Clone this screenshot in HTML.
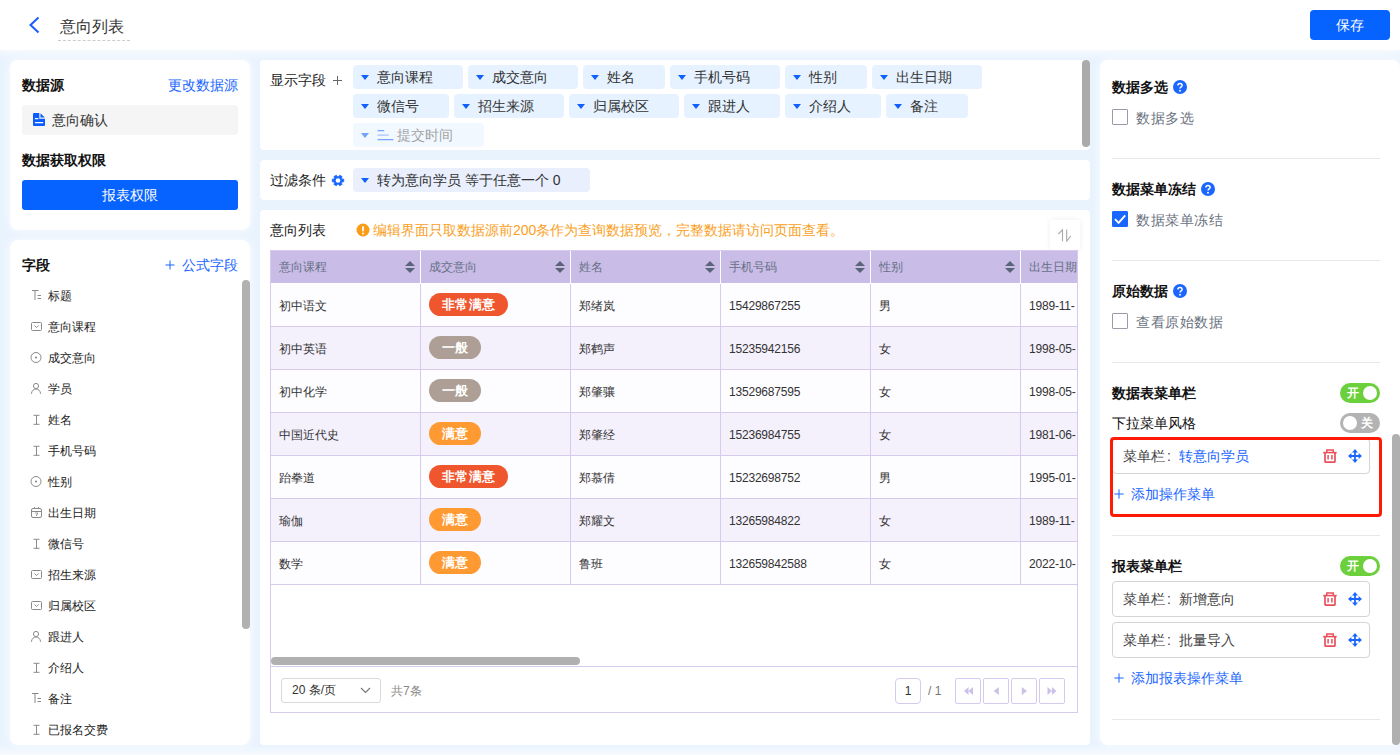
<!DOCTYPE html>
<html lang="zh">
<head>
<meta charset="utf-8">
<title>意向列表</title>
<style>
*{box-sizing:border-box;margin:0;padding:0}
html,body{width:1400px;height:755px;overflow:hidden}
body{position:relative;background:#e9f3fe;font-family:"Liberation Sans",sans-serif;font-size:14px;color:#333;line-height:1}
.abs{position:absolute}
i{font-style:normal}
.card{position:absolute;background:#fff;border-radius:8px}
.glow{box-shadow:0 0 9px 1px rgba(255,255,255,.7)}
.b{font-weight:bold;color:#111}
.blue{color:#1a66ff}
#hdr{position:absolute;left:0;top:0;width:1400px;height:50px;background:#fff;box-shadow:0 0 10px 2px rgba(255,255,255,.9)}
#title{position:absolute;left:58px;top:14px;height:27px;width:72px;padding-left:2px;padding-top:2px;font-size:16px;line-height:22px;color:#333;border-bottom:1px dashed #ccc}
#save{position:absolute;left:1310px;top:10px;width:80px;height:30px;border-radius:4px;background:#0663ff;color:#fff;font-size:14px;line-height:30px;text-align:center}
.t14{position:absolute;font-size:14px;line-height:20px;white-space:nowrap}
.fld{position:absolute;left:48px;font-size:12px;line-height:18px;color:#222;white-space:nowrap}
.fic{position:absolute;left:29px;width:14px;height:14px}
.chip{position:absolute;height:24px;border-radius:4px;background:#e6f2ff;font-size:14px;line-height:24px;color:#333;white-space:nowrap;padding-left:24px}
.chip:before{content:"";position:absolute;left:8.4px;top:9.6px;border-left:4.5px solid transparent;border-right:4.5px solid transparent;border-top:5.4px solid #1060ff}
#tbl{position:absolute;left:270px;top:250px;width:808px;height:463px;border:1px solid #d6cbef;overflow:hidden;background:#fff}
.th{position:absolute;top:-1px;height:33px;width:150px;background:#c9bce7;border-right:1px solid #fff;color:#667085;font-size:12px;line-height:35px;padding-left:8px;white-space:nowrap}
.sort{position:absolute;right:5px;top:11px;width:10px;height:12px}
.sort:before{content:"";position:absolute;left:0;top:0;border-left:5px solid transparent;border-right:5px solid transparent;border-bottom:5px solid #5a6478}
.sort:after{content:"";position:absolute;left:0;top:7px;border-left:5px solid transparent;border-right:5px solid transparent;border-top:5px solid #5a6478}
.tr{position:absolute;left:0;width:900px;height:43px;border-bottom:1px solid #d6cbef;background:#fdfcff}
.tr.odd{background:#f4f0fc}
.td{position:absolute;top:0;height:42px;width:150px;border-right:1px solid #d6cbef;font-size:12px;line-height:44px;padding-left:8px;color:#333;white-space:nowrap;overflow:hidden}
.tag{position:absolute;left:8px;top:9px;height:23px;border-radius:12px;color:#fff;font-size:13px;letter-spacing:.5px;font-weight:bold;line-height:23px;padding:0 12px 0 12.5px}
.chip.fade:before{border-top-color:#70a2ff}
.t-red{background:#f0562e}
.t-gry{background:#ad9f95}
.t-org{background:#ff9a33}
.hr{position:absolute;left:1112px;width:268px;height:1px;background:#e8e8e8}
.cb{position:absolute;left:1112px;width:16px;height:16px;border:1px solid #9a9aa8;border-radius:1px;background:#fff}
.cbl{position:absolute;left:1136px;margin-top:1px;font-size:14px;line-height:20px;color:#6b7280;letter-spacing:.6px;white-space:nowrap}
.q{position:absolute;width:14px;height:14px}
.sw{position:absolute;left:1340px;width:40px;height:20px;border-radius:10px;font-size:12px;font-weight:bold;color:#fff;line-height:20px}
.sw i{position:absolute;top:3px;width:14px;height:14px;border-radius:50%;background:#fff}
.mi{position:absolute;left:1112px;width:258px;height:36px;border:1px solid #d4d4d4;border-radius:4px;background:#fff;font-size:14px;line-height:34px;padding-left:10px;color:#444;white-space:nowrap}
</style>
</head>
<body>
<div class="abs" style="left:0;top:745px;width:1400px;height:10px;background:linear-gradient(to bottom,rgba(255,255,255,0),rgba(255,255,255,.65))"></div>
<div id="hdr">
<svg class="abs" style="left:27px;top:15px" width="14" height="20" viewBox="0 0 14 20"><path d="M11.5 2.5 L3.5 10 L11.5 17.5" fill="none" stroke="#1a5cff" stroke-width="2"/></svg>
<div id="title">意向列表</div>
<div id="save">保存</div>
</div>
<div class="card glow" style="left:10px;top:60px;width:240px;height:170px"></div>
<div class="t14 b" style="left:22px;top:75px">数据源</div>
<div class="t14 blue" style="left:168px;top:75px">更改数据源</div>
<div class="abs" style="left:22px;top:105px;width:216px;height:30px;background:#f5f5f5;border-radius:3px"></div>
<svg class="abs" style="left:33.2px;top:113px" width="12" height="13" viewBox="0 0 12 13"><path d="M1 0H6.3V5.7H12V12a1 1 0 0 1-1 1H1a1 1 0 0 1-1-1V1a1 1 0 0 1 1-1z" fill="#0a5cff"/><path d="M7.5 .2L11.8 4.5H7.5z" fill="#0a5cff"/><path d="M1.9 5.6H5.4M1.9 9.6H10.2" stroke="#fff" stroke-width="1.2" fill="none"/></svg>
<div class="t14" style="left:52px;top:110px;color:#333">意向确认</div>
<div class="t14 b" style="left:22px;top:150px">数据获取权限</div>
<div class="abs" style="left:22px;top:180px;width:216px;height:30px;background:#0663ff;border-radius:3px;color:#fff;font-size:14px;line-height:30px;text-align:center">报表权限</div>
<div class="card glow" style="left:10px;top:240px;width:240px;height:505px"></div>
<div class="t14 b" style="left:22px;top:255px">字段</div>
<svg class="abs" style="left:165px;top:260px" width="10" height="10" viewBox="0 0 10 10"><path d="M5 .5V9.5M.5 5H9.5" stroke="#1a66ff" stroke-width="1" fill="none"/></svg><div class="t14 blue" style="left:182px;top:255px">公式字段</div>
<div class="abs" style="left:242px;top:280px;width:8px;height:349px;border-radius:4px;background:#b1b1b1"></div>
<svg class="fic" style="top:288px" viewBox="0 0 14 14"><path d="M3 2.5H9.5M6 2.5V12" fill="none" stroke="#8a8a8a" stroke-width="1"/><path d="M8.5 7.5H12M8.5 10.5H12" fill="none" stroke="#8a8a8a" stroke-width="1"/></svg>
<div class="fld" style="top:287px">标题</div>
<svg class="fic" style="top:319px" viewBox="0 0 14 14"><rect x="2.5" y="3.5" width="10" height="8" rx="1" fill="none" stroke="#8a8a8a" stroke-width="1"/><path d="M5.5 6.5L7.5 8.5L9.5 6.5" fill="none" stroke="#8a8a8a" stroke-width="1"/></svg>
<div class="fld" style="top:318px">意向课程</div>
<svg class="fic" style="top:350px" viewBox="0 0 14 14"><circle cx="7" cy="7.5" r="5" fill="none" stroke="#8a8a8a" stroke-width="1"/><circle cx="7" cy="7.5" r="1.1" fill="#8a8a8a"/></svg>
<div class="fld" style="top:349px">成交意向</div>
<svg class="fic" style="top:381px" viewBox="0 0 14 14"><circle cx="7" cy="5" r="2.6" fill="none" stroke="#8a8a8a" stroke-width="1"/><path d="M2.3 12.8C2.8 9.6 4.8 8 7 8S11.2 9.6 11.7 12.8" fill="none" stroke="#8a8a8a" stroke-width="1"/></svg>
<div class="fld" style="top:380px">学员</div>
<svg class="fic" style="top:412px" viewBox="0 0 14 14"><path d="M4.5 3.3H10.5M4.5 12.3H10.5M7.5 3.3V12.3" fill="none" stroke="#8a8a8a" stroke-width="1"/></svg>
<div class="fld" style="top:411px">姓名</div>
<svg class="fic" style="top:443px" viewBox="0 0 14 14"><path d="M4.5 3.3H10.5M4.5 12.3H10.5M7.5 3.3V12.3" fill="none" stroke="#8a8a8a" stroke-width="1"/></svg>
<div class="fld" style="top:442px">手机号码</div>
<svg class="fic" style="top:474px" viewBox="0 0 14 14"><circle cx="7" cy="7.5" r="5" fill="none" stroke="#8a8a8a" stroke-width="1"/><circle cx="7" cy="7.5" r="1.1" fill="#8a8a8a"/></svg>
<div class="fld" style="top:473px">性别</div>
<svg class="fic" style="top:505px" viewBox="0 0 14 14"><rect x="2.5" y="3.5" width="10" height="9" rx="1.5" fill="none" stroke="#8a8a8a" stroke-width="1"/><path d="M2.5 6.5H12.5M5.5 2V4M9.5 2V4" fill="none" stroke="#8a8a8a" stroke-width="1"/><path d="M6.3 8H8.7L7.3 11" fill="none" stroke="#8a8a8a" stroke-width=".9"/></svg>
<div class="fld" style="top:504px">出生日期</div>
<svg class="fic" style="top:536px" viewBox="0 0 14 14"><path d="M4.5 3.3H10.5M4.5 12.3H10.5M7.5 3.3V12.3" fill="none" stroke="#8a8a8a" stroke-width="1"/></svg>
<div class="fld" style="top:535px">微信号</div>
<svg class="fic" style="top:567px" viewBox="0 0 14 14"><rect x="2.5" y="3.5" width="10" height="8" rx="1" fill="none" stroke="#8a8a8a" stroke-width="1"/><path d="M5.5 6.5L7.5 8.5L9.5 6.5" fill="none" stroke="#8a8a8a" stroke-width="1"/></svg>
<div class="fld" style="top:566px">招生来源</div>
<svg class="fic" style="top:598px" viewBox="0 0 14 14"><rect x="2.5" y="3.5" width="10" height="8" rx="1" fill="none" stroke="#8a8a8a" stroke-width="1"/><path d="M5.5 6.5L7.5 8.5L9.5 6.5" fill="none" stroke="#8a8a8a" stroke-width="1"/></svg>
<div class="fld" style="top:597px">归属校区</div>
<svg class="fic" style="top:629px" viewBox="0 0 14 14"><circle cx="7" cy="5" r="2.6" fill="none" stroke="#8a8a8a" stroke-width="1"/><path d="M2.3 12.8C2.8 9.6 4.8 8 7 8S11.2 9.6 11.7 12.8" fill="none" stroke="#8a8a8a" stroke-width="1"/></svg>
<div class="fld" style="top:628px">跟进人</div>
<svg class="fic" style="top:660px" viewBox="0 0 14 14"><path d="M4.5 3.3H10.5M4.5 12.3H10.5M7.5 3.3V12.3" fill="none" stroke="#8a8a8a" stroke-width="1"/></svg>
<div class="fld" style="top:659px">介绍人</div>
<svg class="fic" style="top:691px" viewBox="0 0 14 14"><path d="M3 2.5H9.5M6 2.5V12" fill="none" stroke="#8a8a8a" stroke-width="1"/><path d="M8.5 7.5H12M8.5 10.5H12" fill="none" stroke="#8a8a8a" stroke-width="1"/></svg>
<div class="fld" style="top:690px">备注</div>
<svg class="fic" style="top:722px" viewBox="0 0 14 14"><path d="M4.5 3.3H10.5M4.5 12.3H10.5M7.5 3.3V12.3" fill="none" stroke="#8a8a8a" stroke-width="1"/></svg>
<div class="fld" style="top:721px">已报名交费</div>
<div class="card" style="left:260px;top:60px;width:830px;height:90px;border-radius:4px"></div>
<div class="card" style="left:260px;top:160px;width:830px;height:40px;border-radius:4px"></div>
<div class="card" style="left:260px;top:210px;width:830px;height:535px;border-radius:4px"></div>
<div class="t14" style="left:270px;top:70px;color:#222">显示字段</div>
<svg class="abs" style="left:332px;top:75px" width="11" height="11" viewBox="0 0 11 11"><path d="M5.5 1V10M1 5.5H10" stroke="#666" stroke-width="1" fill="none"/></svg>
<div class="chip" style="left:353px;top:65px;width:110px">意向课程</div>
<div class="chip" style="left:468px;top:65px;width:110px">成交意向</div>
<div class="chip" style="left:583px;top:65px;width:82px">姓名</div>
<div class="chip" style="left:670px;top:65px;width:110px">手机号码</div>
<div class="chip" style="left:785px;top:65px;width:82px">性别</div>
<div class="chip" style="left:872px;top:65px;width:110px">出生日期</div>
<div class="chip" style="left:353px;top:94px;width:96px">微信号</div>
<div class="chip" style="left:454px;top:94px;width:110px">招生来源</div>
<div class="chip" style="left:569px;top:94px;width:110px">归属校区</div>
<div class="chip" style="left:684px;top:94px;width:96px">跟进人</div>
<div class="chip" style="left:785px;top:94px;width:96px">介绍人</div>
<div class="chip" style="left:886px;top:94px;width:82px">备注</div>
<div class="chip fade" style="left:353px;top:123px;width:131px;padding-left:44px;background:#f1f8ff;color:#a3a3a3"><svg class="abs" style="left:24px;top:5px" width="17" height="14" viewBox="0 0 17 14"><path d="M.6 2.6H7.2M.6 11.6H16.4" stroke="#74a4ff" stroke-width="1.1" fill="none"/><path d="M.6 7.1H11.8" stroke="#a9c6ff" stroke-width="1.3" fill="none"/></svg>提交时间</div>
<div class="abs" style="left:1082px;top:60px;width:8px;height:87px;border-radius:4px;background:#ababab"></div>
<div class="t14" style="left:270px;top:170px;color:#222">过滤条件</div>
<svg class="abs" style="left:330.5px;top:173.9px" width="14" height="13" viewBox="0 0 14 13"><path d="M10.84 4.93 L12.72 5.19 L12.72 7.81 L10.84 8.07 L10.40 8.77 L11.10 10.40 L8.63 11.72 L7.44 10.34 L6.56 10.34 L5.37 11.72 L2.90 10.40 L3.60 8.77 L3.16 8.07 L1.28 7.81 L1.28 5.19 L3.16 4.93 L3.60 4.23 L2.90 2.60 L5.37 1.28 L6.56 2.66 L7.44 2.66 L8.63 1.28 L11.10 2.60 L10.40 4.23Z" fill="#1a66ff" stroke="#1a66ff" stroke-width=".8" stroke-linejoin="round"/><circle cx="7" cy="6.5" r="2.3" fill="#fff"/></svg>
<div class="chip" style="left:353px;top:168px;width:237px;background:#e9effd">转为意向学员 等于任意一个 0</div>
<div class="t14" style="left:270px;top:220px;color:#222">意向列表</div>
<svg class="abs" style="left:355.7px;top:222.5px" width="14" height="14" viewBox="0 0 14 14"><circle cx="7" cy="7" r="6.5" fill="#fa9c16"/><rect x="6.1" y="3" width="1.8" height="5.4" rx=".9" fill="#fff"/><circle cx="7" cy="10.4" r="1" fill="#fff"/></svg>
<div class="t14" style="left:373px;top:220px;color:#fa9f1e">编辑界面只取数据源前200条作为查询数据预览，完整数据请访问页面查看。</div>
<div class="abs" style="left:1050px;top:220px;width:30px;height:30px;background:#fff;border-radius:2px;box-shadow:0 0 5px rgba(80,60,140,.10)"><svg class="abs" style="left:7px;top:8px" width="16" height="14" viewBox="0 0 16 14"><path d="M1.3 6L5.5 1.8V13.3" fill="none" stroke="#aaa" stroke-width="1.1"/><path d="M9.7 1.6V13.2L13.8 8" fill="none" stroke="#aaa" stroke-width="1.1"/></svg></div>
<div id="tbl">
<div class="th" style="left:-1px;width:151px;padding-left:9px">意向课程<span class="sort"></span></div>
<div class="th" style="left:150px;width:150px;padding-left:8px">成交意向<span class="sort"></span></div>
<div class="th" style="left:300px;width:150px;padding-left:8px">姓名<span class="sort"></span></div>
<div class="th" style="left:450px;width:150px;padding-left:8px">手机号码<span class="sort"></span></div>
<div class="th" style="left:600px;width:150px;padding-left:8px">性别<span class="sort"></span></div>
<div class="th" style="left:750px;width:150px;padding-left:8px">出生日期</div>
<div class="tr" style="top:33px">
<div class="td" style="left:0px">初中语文</div>
<div class="td" style="left:150px"><span class="tag t-red">非常满意</span></div>
<div class="td" style="left:300px">郑绪岚</div>
<div class="td" style="left:450px;letter-spacing:-.2px">15429867255</div>
<div class="td" style="left:600px">男</div>
<div class="td" style="left:750px;letter-spacing:-.2px">1989-11-</div>
</div>
<div class="tr odd" style="top:76px">
<div class="td" style="left:0px">初中英语</div>
<div class="td" style="left:150px"><span class="tag t-gry">一般</span></div>
<div class="td" style="left:300px">郑鹤声</div>
<div class="td" style="left:450px;letter-spacing:-.2px">15235942156</div>
<div class="td" style="left:600px">女</div>
<div class="td" style="left:750px;letter-spacing:-.2px">1998-05-</div>
</div>
<div class="tr" style="top:119px">
<div class="td" style="left:0px">初中化学</div>
<div class="td" style="left:150px"><span class="tag t-gry">一般</span></div>
<div class="td" style="left:300px">郑肇骧</div>
<div class="td" style="left:450px;letter-spacing:-.2px">13529687595</div>
<div class="td" style="left:600px">女</div>
<div class="td" style="left:750px;letter-spacing:-.2px">1998-05-</div>
</div>
<div class="tr odd" style="top:162px">
<div class="td" style="left:0px">中国近代史</div>
<div class="td" style="left:150px"><span class="tag t-org">满意</span></div>
<div class="td" style="left:300px">郑肇经</div>
<div class="td" style="left:450px;letter-spacing:-.2px">15236984755</div>
<div class="td" style="left:600px">女</div>
<div class="td" style="left:750px;letter-spacing:-.2px">1981-06-</div>
</div>
<div class="tr" style="top:205px">
<div class="td" style="left:0px">跆拳道</div>
<div class="td" style="left:150px"><span class="tag t-red">非常满意</span></div>
<div class="td" style="left:300px">郑慕倩</div>
<div class="td" style="left:450px;letter-spacing:-.2px">15232698752</div>
<div class="td" style="left:600px">男</div>
<div class="td" style="left:750px;letter-spacing:-.2px">1995-01-</div>
</div>
<div class="tr odd" style="top:248px">
<div class="td" style="left:0px">瑜伽</div>
<div class="td" style="left:150px"><span class="tag t-org">满意</span></div>
<div class="td" style="left:300px">郑耀文</div>
<div class="td" style="left:450px;letter-spacing:-.2px">13265984822</div>
<div class="td" style="left:600px">女</div>
<div class="td" style="left:750px;letter-spacing:-.2px">1989-11-</div>
</div>
<div class="tr" style="top:291px">
<div class="td" style="left:0px">数学</div>
<div class="td" style="left:150px"><span class="tag t-org">满意</span></div>
<div class="td" style="left:300px">鲁班</div>
<div class="td" style="left:450px;letter-spacing:-.2px">132659842588</div>
<div class="td" style="left:600px">女</div>
<div class="td" style="left:750px;letter-spacing:-.2px">2022-10-</div>
</div>
<div class="abs" style="left:0;top:406px;width:309px;height:8px;border-radius:4px;background:#b0b0b0"></div>
<div class="abs" style="left:0;top:415px;width:808px;height:1px;background:#d6cbef"></div>
<div class="abs" style="left:10px;top:427px;width:100px;height:25px;border:1px solid #d9d9d9;border-radius:3px;font-size:12px;line-height:23px;padding-left:10px;color:#333">20 条/页<svg class="abs" style="left:78px;top:8px" width="11" height="7" viewBox="0 0 11 7"><path d="M1 1L5.5 5.5L10 1" fill="none" stroke="#777" stroke-width="1.2"/></svg></div>
<div class="abs" style="left:120px;top:431px;font-size:12px;line-height:18px;color:#888">共7条</div>
<div class="abs" style="left:624px;top:427px;width:26px;height:26px;border:1px solid #d6cbef;border-radius:4px;font-size:12px;line-height:24px;text-align:center;color:#333">1</div>
<div class="abs" style="left:657px;top:431px;font-size:12px;line-height:18px;color:#777">/ 1</div>
<div class="abs" style="left:684px;top:427px;width:26px;height:26px;border:1px solid #d6cbef;border-radius:2px"><svg class="abs" style="left:5px;top:5px" width="14" height="14" viewBox="0 0 14 14" fill="#cbc0e8"><path d="M7.5 3L3 7L7.5 11ZM12 3L7.5 7L12 11Z"/></svg></div>
<div class="abs" style="left:712px;top:427px;width:26px;height:26px;border:1px solid #d6cbef;border-radius:2px"><svg class="abs" style="left:5px;top:5px" width="14" height="14" viewBox="0 0 14 14" fill="#cbc0e8"><path d="M9.8 3L4.6 7L9.8 11Z"/></svg></div>
<div class="abs" style="left:740px;top:427px;width:26px;height:26px;border:1px solid #d6cbef;border-radius:2px"><svg class="abs" style="left:5px;top:5px" width="14" height="14" viewBox="0 0 14 14" fill="#cbc0e8"><path d="M4.8 3L10 7L4.8 11Z"/></svg></div>
<div class="abs" style="left:768px;top:427px;width:26px;height:26px;border:1px solid #d6cbef;border-radius:2px"><svg class="abs" style="left:5px;top:5px" width="14" height="14" viewBox="0 0 14 14" fill="#cbc0e8"><path d="M2.5 3L7 7L2.5 11ZM7 3L11.5 7L7 11Z"/></svg></div>
</div>
<div class="card glow" style="left:1100px;top:60px;width:300px;height:685px"></div>
<div class="t14 b" style="left:1112px;top:77px">数据多选</div><svg class="q" style="left:1173px;top:80px" viewBox="0 0 14 14"><circle cx="7" cy="7" r="7" fill="#1a66ff"/><path d="M4.9 5.6C4.9 4.3 5.8 3.5 7 3.5S9.1 4.3 9.1 5.4C9.1 6.8 7 7 7 8.6" fill="none" stroke="#fff" stroke-width="1.5"/><circle cx="7" cy="10.7" r=".95" fill="#fff"/></svg>
<div class="cb" style="top:109px"></div><div class="cbl" style="top:107px">数据多选</div>
<div class="hr" style="top:158px"></div>
<div class="t14 b" style="left:1112px;top:179px">数据菜单冻结</div><svg class="q" style="left:1201px;top:182px" viewBox="0 0 14 14"><circle cx="7" cy="7" r="7" fill="#1a66ff"/><path d="M4.9 5.6C4.9 4.3 5.8 3.5 7 3.5S9.1 4.3 9.1 5.4C9.1 6.8 7 7 7 8.6" fill="none" stroke="#fff" stroke-width="1.5"/><circle cx="7" cy="10.7" r=".95" fill="#fff"/></svg>
<div class="cb" style="top:211px;background:#1a66ff;border-color:#1a66ff"><svg class="abs" style="left:0;top:0" width="14" height="14" viewBox="0 0 14 14"><path d="M2 7.2L5.6 10.8L12.2 3.4" fill="none" stroke="#fff" stroke-width="1.9"/></svg></div><div class="cbl" style="top:209px">数据菜单冻结</div>
<div class="hr" style="top:260px"></div>
<div class="t14 b" style="left:1112px;top:281px">原始数据</div><svg class="q" style="left:1173px;top:284px" viewBox="0 0 14 14"><circle cx="7" cy="7" r="7" fill="#1a66ff"/><path d="M4.9 5.6C4.9 4.3 5.8 3.5 7 3.5S9.1 4.3 9.1 5.4C9.1 6.8 7 7 7 8.6" fill="none" stroke="#fff" stroke-width="1.5"/><circle cx="7" cy="10.7" r=".95" fill="#fff"/></svg>
<div class="cb" style="top:313px"></div><div class="cbl" style="top:311px">查看原始数据</div>
<div class="hr" style="top:362px"></div>
<div class="t14 b" style="left:1112px;top:383px">数据表菜单栏</div><div class="sw" style="top:383px;background:#6ccf3c;padding-left:7px">开<i style="left:23px"></i></div>
<div class="t14" style="left:1112px;top:413px;color:#111">下拉菜单风格</div><div class="sw" style="top:413px;background:#b3b3b3;padding-left:21px">关<i style="left:3px"></i></div>
<div class="mi" style="top:438px">菜单栏<i style="display:inline-block;width:14px;padding-left:2px">:</i><span class="blue">转意向学员</span></div><svg class="abs" style="left:1323px;top:449px" width="14" height="14" viewBox="0 0 14 14"><path d="M0.3 3.6H13.7" fill="none" stroke="#e8505b" stroke-width="1.6"/><path d="M3.8 3.4V.9H10.2V3.4" fill="none" stroke="#e8505b" stroke-width="1.5"/><path d="M2 4V12.2a1 1 0 0 0 1 1H11a1 1 0 0 0 1-1V4" fill="none" stroke="#e8505b" stroke-width="1.7"/><path d="M5.1 6V10.6M8.9 6V10.6" fill="none" stroke="#e8505b" stroke-width="1.5"/></svg><svg class="abs" style="left:1348.2px;top:448.6px" width="14" height="14" viewBox="0 0 14 14"><path d="M7 2V12M2 7H12" fill="none" stroke="#1a66ff" stroke-width="1.8"/><path d="M7 0L10 3.4H4ZM7 14L10 10.6H4ZM0 7L3.4 4V10ZM14 7L10.6 4V10Z" fill="#1a66ff"/></svg>
<svg class="abs" style="left:1114px;top:488.5px" width="10" height="10" viewBox="0 0 10 10"><path d="M5 .3V9.7M.3 5H9.7" stroke="#1a66ff" stroke-width="1" fill="none"/></svg><div class="t14 blue" style="left:1131px;top:484px">添加操作菜单</div>
<div class="abs" style="left:1110px;top:437px;width:272px;height:80px;border:3px solid #ff1a05;border-radius:4px"></div>
<div class="hr" style="top:535px"></div>
<div class="t14 b" style="left:1112px;top:556px">报表菜单栏</div><div class="sw" style="top:556px;background:#6ccf3c;padding-left:7px">开<i style="left:23px"></i></div>
<div class="mi" style="top:581px">菜单栏<i style="display:inline-block;width:14px;padding-left:2px">:</i><span>新增意向</span></div><svg class="abs" style="left:1323px;top:592px" width="14" height="14" viewBox="0 0 14 14"><path d="M0.3 3.6H13.7" fill="none" stroke="#e8505b" stroke-width="1.6"/><path d="M3.8 3.4V.9H10.2V3.4" fill="none" stroke="#e8505b" stroke-width="1.5"/><path d="M2 4V12.2a1 1 0 0 0 1 1H11a1 1 0 0 0 1-1V4" fill="none" stroke="#e8505b" stroke-width="1.7"/><path d="M5.1 6V10.6M8.9 6V10.6" fill="none" stroke="#e8505b" stroke-width="1.5"/></svg><svg class="abs" style="left:1348.2px;top:591.6px" width="14" height="14" viewBox="0 0 14 14"><path d="M7 2V12M2 7H12" fill="none" stroke="#1a66ff" stroke-width="1.8"/><path d="M7 0L10 3.4H4ZM7 14L10 10.6H4ZM0 7L3.4 4V10ZM14 7L10.6 4V10Z" fill="#1a66ff"/></svg>
<div class="mi" style="top:622px">菜单栏<i style="display:inline-block;width:14px;padding-left:2px">:</i><span>批量导入</span></div><svg class="abs" style="left:1323px;top:633px" width="14" height="14" viewBox="0 0 14 14"><path d="M0.3 3.6H13.7" fill="none" stroke="#e8505b" stroke-width="1.6"/><path d="M3.8 3.4V.9H10.2V3.4" fill="none" stroke="#e8505b" stroke-width="1.5"/><path d="M2 4V12.2a1 1 0 0 0 1 1H11a1 1 0 0 0 1-1V4" fill="none" stroke="#e8505b" stroke-width="1.7"/><path d="M5.1 6V10.6M8.9 6V10.6" fill="none" stroke="#e8505b" stroke-width="1.5"/></svg><svg class="abs" style="left:1348.2px;top:632.6px" width="14" height="14" viewBox="0 0 14 14"><path d="M7 2V12M2 7H12" fill="none" stroke="#1a66ff" stroke-width="1.8"/><path d="M7 0L10 3.4H4ZM7 14L10 10.6H4ZM0 7L3.4 4V10ZM14 7L10.6 4V10Z" fill="#1a66ff"/></svg>
<svg class="abs" style="left:1114px;top:672.5px" width="10" height="10" viewBox="0 0 10 10"><path d="M5 .3V9.7M.3 5H9.7" stroke="#1a66ff" stroke-width="1" fill="none"/></svg><div class="t14 blue" style="left:1131px;top:668px">添加报表操作菜单</div>
<div class="hr" style="top:719px"></div>
<div class="abs" style="left:1392px;top:434px;width:8px;height:311px;border-radius:4px;background:#b0b0b0"></div>
</body>
</html>
